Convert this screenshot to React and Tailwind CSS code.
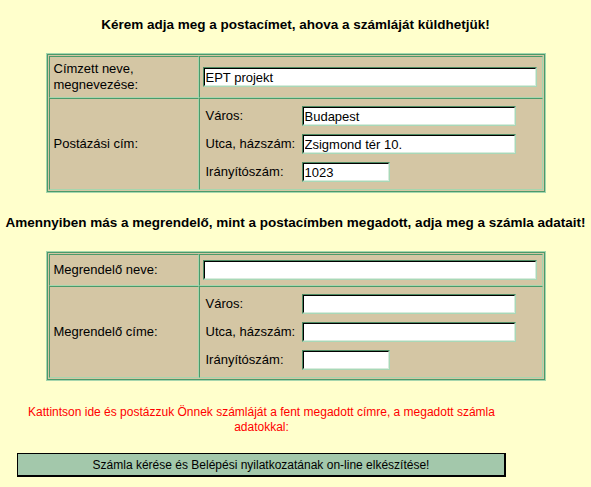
function Field({ className, value }) {
  return (
    <div
      className={`border border-t-[#4d8a62] border-l-[#4d8a62] border-b-[#a8d8b8] border-r-[#a8d8b8] ${className}`}
    >
      <input
        readOnly
        defaultValue={value}
        className="block w-full h-[18px] bg-white border border-t-black border-l-black border-b-[#d8ecdc] border-r-[#d8ecdc] px-px text-[13px] leading-4 text-black outline-none font-['Liberation_Sans',Arial,sans-serif]"
      />
    </div>
  );
}

function Cell({ className, children }) {
  return (
    <div
      className={`border border-t-[#4c9a6a] border-l-[#4c9a6a] border-b-[#a6d6ae] border-r-[#a6d6ae] ${className}`}
    >
      {children}
    </div>
  );
}

function Frame({ children }) {
  return (
    <div className="mx-auto w-[500px] border border-[#a6d6ae]">
      <div className="border border-[#4c9a6a]">
        <div className="grid grid-cols-[150px_344px] bg-[#d4c6a4] p-px">{children}</div>
      </div>
    </div>
  );
}

function Address({ city, street, zip }) {
  return (
    <div className="grid grid-cols-[102px_auto] items-center gap-y-2">
      <div className="pl-[6px]">Város:</div>
      <Field className="w-[214px]" value={city} />
      <div className="pl-[6px] whitespace-nowrap">Utca, házszám:</div>
      <Field className="w-[214px]" value={street} />
      <div className="pl-[6px]">Irányítószám:</div>
      <Field className="w-[88px]" value={zip} />
    </div>
  );
}

export default function App() {
  return (
    <div className="min-h-[487px] w-full bg-[#ffffcc] pt-[17px] text-[13px] leading-4 text-black font-['Liberation_Sans',Arial,sans-serif]">
      <h1 className="text-center text-[13.5px] font-bold leading-4 whitespace-nowrap">
        Kérem adja meg a postacímet, ahova a számláját küldhetjük!
      </h1>

      <div className="mt-5">
        <Frame>
          <Cell className="flex h-[42px] items-center pl-1">
            <span>
              Címzett neve,
              <br />
              megnevezése:
            </span>
          </Cell>
          <Cell className="flex h-[42px] items-center pl-[3px]">
            <Field className="w-[334px]" value="EPT projekt" />
          </Cell>
          <Cell className="flex h-[92px] items-center pl-1">Postázási cím:</Cell>
          <Cell className="flex h-[92px] items-center">
            <Address city="Budapest" street="Zsigmond tér 10." zip="1023" />
          </Cell>
        </Frame>
      </div>

      <h2 className="mt-[22px] text-center text-[13.5px] font-bold leading-4 whitespace-nowrap">
        Amennyiben más a megrendelő, mint a postacímben megadott, adja meg a számla adatait!
      </h2>

      <div className="mt-5">
        <Frame>
          <Cell className="flex h-[32px] items-center pl-1">Megrendelő neve:</Cell>
          <Cell className="flex h-[32px] items-center pl-[3px]">
            <Field className="w-[334px]" value="" />
          </Cell>
          <Cell className="flex h-[92px] items-center pl-1">Megrendelő címe:</Cell>
          <Cell className="flex h-[92px] items-center">
            <Address city="" street="" zip="" />
          </Cell>
        </Frame>
      </div>

      <div className="ml-[17px] mt-[24px] w-[489px] text-center text-[12px] leading-[15px] text-[#ff0000]">
        Kattintson ide és postázzuk Önnek számláját a fent megadott címre, a megadott számla adatokkal:
      </div>

      <button className="ml-[17px] mt-[18px] flex h-[24px] w-[489px] items-center justify-center border-t border-l border-r-2 border-b-2 border-black bg-[#a3c8ab] text-[12px] leading-4 text-black font-['Liberation_Sans',Arial,sans-serif]">
        Számla kérése és Belépési nyilatkozatának on-line elkészítése!
      </button>
    </div>
  );
}
